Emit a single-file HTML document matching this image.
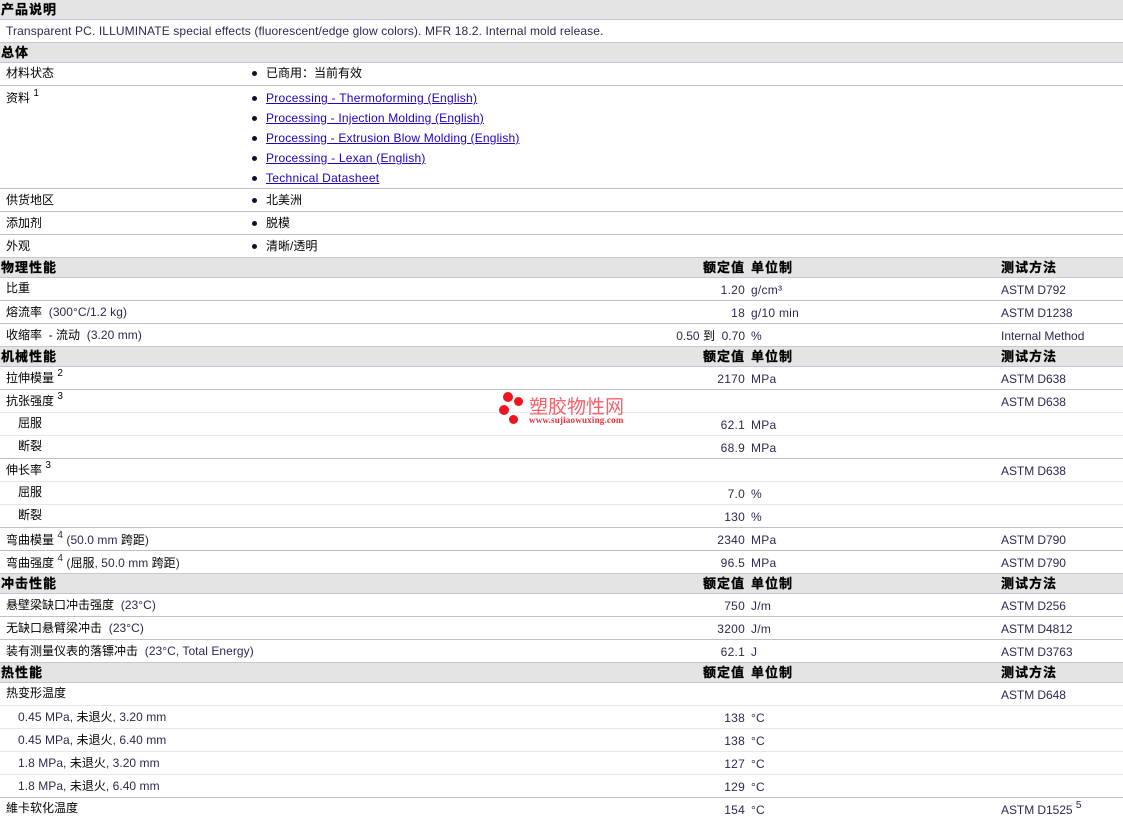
<!DOCTYPE html>
<html><head><meta charset="utf-8"><style>
html,body{margin:0;padding:0;background:#fff;width:1123px;height:817px;overflow:hidden}
body{position:relative;font:12px/16px "Liberation Sans","WenQuanYi Zen Hei","Noto Sans CJK SC",sans-serif;color:#2a2a50;letter-spacing:.25px}
.h{position:absolute;left:0;width:1123px;background:#e4e4e4;border-top:1px solid #c8c8c8;border-bottom:1px solid #c4c4d4;box-sizing:border-box}
.l{position:absolute;left:0;width:1123px;height:1px;background:#c0c0c0}
.s{position:absolute;left:0;width:1123px;height:1px;background:#e8e8ec}
.t,.b,.r,.u,.m,.a{position:absolute;white-space:nowrap}
.t{letter-spacing:.05px}
.b{font-weight:bold;font-size:13px;letter-spacing:1px;color:#000;font-family:"Noto Sans CJK SC",sans-serif;-webkit-text-stroke:.3px #000}
.r{right:378px;text-align:right}
.u{left:751px}.m{left:1001px;letter-spacing:-.05px}
.c{color:#000;letter-spacing:0}
sup{font-size:10px;line-height:0;position:relative;top:-1px;vertical-align:super}
.a{left:266px;color:#2000c8;text-decoration:underline;letter-spacing:.18px}
.d{position:absolute;left:252px;width:5px;height:5px;border-radius:50%;background:#101030}
.o{position:absolute;border-radius:50%;background:#f0141e}
</style></head><body>
<div class="h" style="top:0;height:20px;border-top:0"></div>
<div class="h" style="top:42px;height:21px"></div>
<div class="h" style="top:257px;height:21px"></div>
<div class="h" style="top:346px;height:21px"></div>
<div class="h" style="top:573px;height:21px"></div>
<div class="h" style="top:662px;height:21px"></div>
<div class="l" style="top:85px"></div><div class="l" style="top:188px"></div><div class="l" style="top:211px"></div><div class="l" style="top:234px"></div>
<div class="l" style="top:300px"></div><div class="l" style="top:323px"></div>
<div class="l" style="top:389px"></div><div class="s" style="top:412px"></div><div class="s" style="top:435px"></div><div class="l" style="top:458px"></div><div class="s" style="top:481px"></div><div class="s" style="top:504px"></div><div class="l" style="top:527px"></div><div class="l" style="top:550px"></div>
<div class="l" style="top:616px"></div><div class="l" style="top:639px"></div>
<div class="s" style="top:705px"></div><div class="s" style="top:728px"></div><div class="s" style="top:751px"></div><div class="s" style="top:774px"></div><div class="l" style="top:797px"></div>

<div class="b" style="left:1px;top:1px">产品说明</div>
<div class="t" style="left:6px;top:23px;letter-spacing:.12px">Transparent PC. ILLUMINATE special effects (fluorescent/edge glow colors). MFR 18.2. Internal mold release.</div>
<div class="b" style="left:1px;top:44px">总体</div>
<div class="t c" style="left:6px;top:65px">材料状态</div><div class="d" style="top:71px"></div><div class="t c" style="left:266px;top:65px">已商用：当前有效</div>
<div class="t c" style="left:6px;top:90px">资料 <sup>1</sup></div>
<div class="d" style="top:96px"></div><a class="a" style="top:90px;letter-spacing:.26px">Processing - Thermoforming (English)</a>
<div class="d" style="top:116px"></div><a class="a" style="top:110px">Processing - Injection Molding (English)</a>
<div class="d" style="top:136px"></div><a class="a" style="top:130px">Processing - Extrusion Blow Molding (English)</a>
<div class="d" style="top:156px"></div><a class="a" style="top:150px;letter-spacing:.22px">Processing - Lexan (English)</a>
<div class="d" style="top:176px"></div><a class="a" style="top:170px;letter-spacing:.28px">Technical Datasheet</a>
<div class="t c" style="left:6px;top:192px">供货地区</div><div class="d" style="top:198px"></div><div class="t c" style="left:266px;top:192px">北美洲</div>
<div class="t c" style="left:6px;top:215px">添加剂</div><div class="d" style="top:221px"></div><div class="t c" style="left:266px;top:215px">脱模</div>
<div class="t c" style="left:6px;top:238px">外观</div><div class="d" style="top:244px"></div><div class="t c" style="left:266px;top:238px">清晰/透明</div>

<div class="b" style="left:1px;top:259px">物理性能</div><div class="b" style="left:703px;top:259px">额定值</div><div class="b" style="left:751px;top:259px">单位制</div><div class="b" style="left:1001px;top:259px">测试方法</div>
<div class="t c" style="left:6px;top:280px">比重</div><div class="r" style="top:282px">1.20</div><div class="u" style="top:282px">g/cm³</div><div class="m" style="top:282px">ASTM D792</div>
<div class="t" style="left:6px;top:304px"><span class="c">熔流率</span>&nbsp; (300°C/1.2 kg)</div><div class="r" style="top:305px">18</div><div class="u" style="top:305px">g/10 min</div><div class="m" style="top:305px">ASTM D1238</div>
<div class="t" style="left:6px;top:327px"><span class="c">收缩率 &nbsp;- 流动</span>&nbsp; (3.20 mm)</div><div class="r" style="top:328px;letter-spacing:0">0.50 <span class="c">到</span>&nbsp; 0.70</div><div class="u" style="top:328px">%</div><div class="m" style="top:328px;letter-spacing:0">Internal Method</div>

<div class="b" style="left:1px;top:348px">机械性能</div><div class="b" style="left:703px;top:348px">额定值</div><div class="b" style="left:751px;top:348px">单位制</div><div class="b" style="left:1001px;top:348px">测试方法</div>
<div class="t c" style="left:6px;top:370px">拉伸模量 <sup>2</sup></div><div class="r" style="top:371px">2170</div><div class="u" style="top:371px">MPa</div><div class="m" style="top:371px">ASTM D638</div>
<div class="t c" style="left:6px;top:393px">抗张强度 <sup>3</sup></div><div class="m" style="top:394px">ASTM D638</div>
<div class="t c" style="left:18px;top:415px">屈服</div><div class="r" style="top:417px">62.1</div><div class="u" style="top:417px">MPa</div>
<div class="t c" style="left:18px;top:438px">断裂</div><div class="r" style="top:440px">68.9</div><div class="u" style="top:440px">MPa</div>
<div class="t c" style="left:6px;top:462px">伸长率 <sup>3</sup></div><div class="m" style="top:463px">ASTM D638</div>
<div class="t c" style="left:18px;top:484px">屈服</div><div class="r" style="top:486px">7.0</div><div class="u" style="top:486px">%</div>
<div class="t c" style="left:18px;top:507px">断裂</div><div class="r" style="top:509px">130</div><div class="u" style="top:509px">%</div>
<div class="t" style="left:6px;top:532px"><span class="c">弯曲模量</span> <sup>4</sup> (50.0 mm <span class="c">跨距</span>)</div><div class="r" style="top:532px">2340</div><div class="u" style="top:532px">MPa</div><div class="m" style="top:532px">ASTM D790</div>
<div class="t" style="left:6px;top:555px"><span class="c">弯曲强度</span> <sup>4</sup> (<span class="c">屈服</span>, 50.0 mm <span class="c">跨距</span>)</div><div class="r" style="top:555px">96.5</div><div class="u" style="top:555px">MPa</div><div class="m" style="top:555px">ASTM D790</div>

<div class="b" style="left:1px;top:575px">冲击性能</div><div class="b" style="left:703px;top:575px">额定值</div><div class="b" style="left:751px;top:575px">单位制</div><div class="b" style="left:1001px;top:575px">测试方法</div>
<div class="t" style="left:6px;top:597px"><span class="c">悬壁梁缺口冲击强度</span>&nbsp; (23°C)</div><div class="r" style="top:598px">750</div><div class="u" style="top:598px">J/m</div><div class="m" style="top:598px">ASTM D256</div>
<div class="t" style="left:6px;top:620px"><span class="c">无缺口悬臂梁冲击</span>&nbsp; (23°C)</div><div class="r" style="top:621px">3200</div><div class="u" style="top:621px">J/m</div><div class="m" style="top:621px">ASTM D4812</div>
<div class="t" style="left:6px;top:643px"><span class="c">装有测量仪表的落镖冲击</span>&nbsp; (23°C, Total Energy)</div><div class="r" style="top:644px">62.1</div><div class="u" style="top:644px">J</div><div class="m" style="top:644px">ASTM D3763</div>

<div class="b" style="left:1px;top:664px">热性能</div><div class="b" style="left:703px;top:664px">额定值</div><div class="b" style="left:751px;top:664px">单位制</div><div class="b" style="left:1001px;top:664px">测试方法</div>
<div class="t c" style="left:6px;top:685px">热变形温度</div><div class="m" style="top:687px">ASTM D648</div>
<div class="t" style="left:18px;top:709px">0.45 MPa, <span class="c">未退火</span>, 3.20 mm</div><div class="r" style="top:710px">138</div><div class="u" style="top:710px">°C</div>
<div class="t" style="left:18px;top:732px">0.45 MPa, <span class="c">未退火</span>, 6.40 mm</div><div class="r" style="top:733px">138</div><div class="u" style="top:733px">°C</div>
<div class="t" style="left:18px;top:755px">1.8 MPa, <span class="c">未退火</span>, 3.20 mm</div><div class="r" style="top:756px">127</div><div class="u" style="top:756px">°C</div>
<div class="t" style="left:18px;top:778px">1.8 MPa, <span class="c">未退火</span>, 6.40 mm</div><div class="r" style="top:779px">129</div><div class="u" style="top:779px">°C</div>
<div class="t c" style="left:6px;top:800px">維卡软化温度</div><div class="r" style="top:802px">154</div><div class="u" style="top:802px">°C</div><div class="m" style="top:802px">ASTM D1525 <sup>5</sup></div>

<div class="o" style="left:503px;top:392px;width:10px;height:10px"></div>
<div class="o" style="left:514px;top:397px;width:9px;height:9px"></div>
<div class="o" style="left:499px;top:405px;width:10px;height:10px"></div>
<div class="o" style="left:509px;top:415px;width:9px;height:9px"></div>
<div class="t" style="left:529px;top:396px;font:19px/20px 'WenQuanYi Zen Hei','Noto Sans CJK SC',sans-serif;color:#f8606a;letter-spacing:0">塑胶物性网</div>
<div class="t" style="left:529px;top:415px;font:bold 9px/10px 'Liberation Serif',serif;color:#f0303a;letter-spacing:.2px">www.sujiaowuxing.com</div>
</body></html>
